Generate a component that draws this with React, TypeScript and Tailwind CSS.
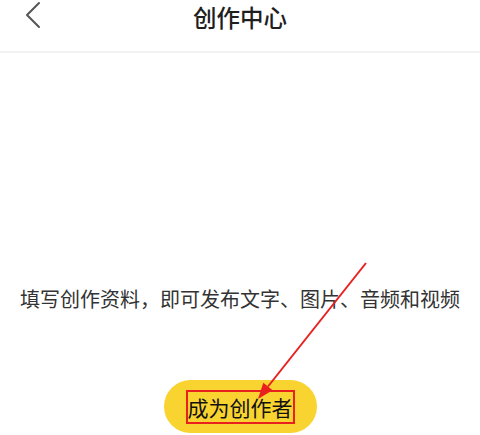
const font = { fontFamily: '"Noto Sans CJK SC", "Noto Sans", sans-serif' }

function BackIcon() {
  return (
    <svg width={18} height={28} viewBox="0 0 18 28" fill="none">
      <polyline points="15,2 3,14 15,26" stroke="#555555" strokeWidth={2} strokeLinecap="round" strokeLinejoin="round" />
    </svg>
  )
}

function App() {
  return (
    <div className="relative h-[435px] w-[480px] overflow-hidden bg-white" style={font}>
      <header className="grid h-[34px] grid-cols-[1fr_auto_1fr] items-center">
        <div className="pl-[24px] pb-[4px]">
          <BackIcon />
        </div>
        <h1 className="text-[23.5px] font-medium leading-[34px] text-[#1f1f1f]">创作中心</h1>
        <div />
      </header>
      <div className="mt-[17px] h-[2px] bg-[#f2f2f2]" />

      <main className="flex flex-col items-center pt-[232px]">
        <p className="text-[20px] leading-[28px] text-[#333333]">
          填写创作资料，即可发布文字、图片、音频和视频
        </p>
        <button
          type="button"
          className="mt-[67px] flex h-[53px] w-[153px] items-center justify-center rounded-full bg-[#f9d431]"
        >
          <span className="border-2 border-[#e8211e] text-[21px] leading-[30px] text-[#111111]">成为创作者</span>
        </button>
      </main>

      {/* annotation arrow */}
      <svg className="pointer-events-none absolute left-0 top-0" width={480} height={435}>
        <line x1={366} y1={263} x2={268} y2={386.5} stroke="#e8211e" strokeWidth={2} />
        <polygon points="258,399 272.6,390.2 263.3,382.7" fill="#e8211e" />
      </svg>
    </div>
  )
}

export default App
